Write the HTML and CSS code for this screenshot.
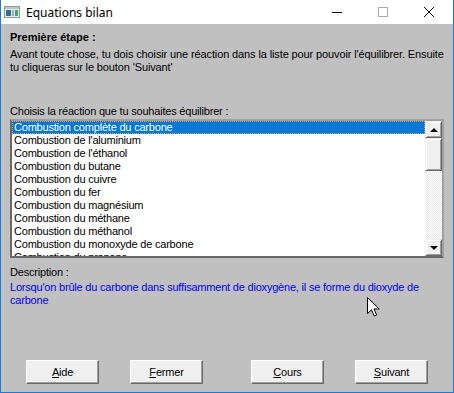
FILE: index.html
```html
<!DOCTYPE html>
<html lang="fr">
<head>
    <meta charset="UTF-8">
    <title>Equations bilan</title>
    <link rel="stylesheet" href="styles.css">
</head>
<body>
    <div class="window">
        <div class="titlebar">
            <svg class="app-icon" width="16" height="12" viewBox="0 0 16 12">
                <rect x="0.5" y="0.5" width="15" height="11" fill="#e8ecef" stroke="#8c9aa4"/>
                <rect x="1" y="1" width="14" height="2" fill="#b8c6d0"/>
                <rect x="2" y="4" width="5" height="6" fill="#2f6f8f"/>
                <rect x="8" y="4" width="2" height="6" fill="#9ab0c0"/>
                <rect x="11" y="4" width="3" height="6" fill="#3fae52"/>
            </svg>
            <span class="title">Equations bilan</span>
            <div class="caption-buttons">
                <div class="cap-btn">
                    <svg width="10" height="10" viewBox="0 0 10 10"><path d="M0 5.5H10" stroke="#000" stroke-width="1"/></svg>
                </div>
                <div class="cap-btn">
                    <svg width="10" height="10" viewBox="0 0 10 10"><rect x="0.5" y="0.5" width="9" height="9" fill="none" stroke="#a8a8a8"/></svg>
                </div>
                <div class="cap-btn">
                    <svg width="10" height="10" viewBox="0 0 10 10"><path d="M0 0L10 10M10 0L0 10" stroke="#000" stroke-width="1"/></svg>
                </div>
            </div>
        </div>

        <div class="client">
            <div class="step-title">Première étape :</div>
            <p class="intro">Avant toute chose, tu dois choisir une réaction dans la liste pour pouvoir l'équilibrer. Ensuite tu cliqueras sur le bouton 'Suivant'</p>

            <div class="list-label">Choisis la réaction que tu souhaites équilibrer :</div>
            <div class="listbox">
                <div class="items">
                    <div class="item selected">Combustion complète du carbone</div>
                    <div class="item">Combustion de l'aluminium</div>
                    <div class="item">Combustion de l'éthanol</div>
                    <div class="item">Combustion du butane</div>
                    <div class="item">Combustion du cuivre</div>
                    <div class="item">Combustion du fer</div>
                    <div class="item">Combustion du magnésium</div>
                    <div class="item">Combustion du méthane</div>
                    <div class="item">Combustion du méthanol</div>
                    <div class="item">Combustion du monoxyde de carbone</div>
                    <div class="item">Combustion du propane</div>
                </div>
                <div class="scrollbar">
                    <div class="sb-btn"><span class="arrow-up"></span></div>
                    <div class="sb-thumb"></div>
                    <div class="sb-track"></div>
                    <div class="sb-btn"><span class="arrow-down"></span></div>
                </div>
            </div>

            <div class="desc-label">Description :</div>
            <p class="desc">Lorsqu'on brûle du carbone dans suffisamment de dioxygène, il se forme du dioxyde de carbone</p>

            <div class="buttons">
                <div class="btn-group">
                    <button class="btn"><u>A</u>ide</button>
                    <button class="btn"><u>F</u>ermer</button>
                </div>
                <div class="btn-group">
                    <button class="btn"><u>C</u>ours</button>
                    <button class="btn"><u>S</u>uivant</button>
                </div>
            </div>

            <svg class="cursor" width="13" height="20" viewBox="0 0 13 20">
                <path d="M0.5 0.5V16.5L4.5 12.8L7.2 19L9.6 18L7 11.9H12.2Z" fill="#fff" stroke="#000" stroke-width="1" stroke-linejoin="miter"/>
            </svg>
        </div>
    </div>
</body>
</html>
```

FILE: styles.css
```css
body {
    margin: 0;
    width: 454px;
    height: 393px;
    overflow: hidden;
    background-color: #c0c0c0;
}
.window {
    width: 454px;
    height: 393px;
    box-sizing: border-box;
    border: 1px solid #1a7ad4;
    border-top: none;
    display: flex;
    flex-direction: column;
}
.titlebar {
    height: 24px;
    flex: none;
    background-color: white;
    display: flex;
    align-items: center;
    font-family: "Noto Sans", sans-serif;
    font-size: 12px;
    color: #000;
}
.app-icon {
    margin-left: 3px;
    margin-right: 6px;
}
.title {
    flex: 1;
}
.caption-buttons {
    display: flex;
    height: 24px;
    margin-right: 1px;
}
.cap-btn {
    width: 46px;
    display: flex;
    align-items: center;
    justify-content: center;
}
.cap-btn svg {
    display: block;
}
.client {
    flex: 1;
    position: relative;
    display: flex;
    flex-direction: column;
    padding: 7px 9px 8px;
    background-color: #c0c0c0;
    font-family: "Liberation Sans", Arial, sans-serif;
    font-size: 11px;
    line-height: 13px;
    letter-spacing: -0.2px;
    color: #000;
}
.step-title {
    font-weight: bold;
    letter-spacing: 0;
}
.intro {
    margin: 4px 0 0;
    letter-spacing: -0.12px;
}
.list-label {
    margin-top: 31px;
}
.listbox {
    margin-top: 1px;
    height: 139px;
    box-sizing: border-box;
    border: 2px solid;
    border-color: #a0a0a0 #a0a0a0 #696969 #696969;
    background-color: white;
    display: flex;
    overflow: hidden;
}
.items {
    flex: 1;
    overflow: hidden;
}
.item {
    height: 13px;
    padding-left: 2px;
    white-space: nowrap;
}
.item.selected {
    background-color: #0078d7;
    color: white;
    outline: 1px dotted #f5a040;
    outline-offset: -1px;
}
.scrollbar {
    width: 17px;
    display: flex;
    flex-direction: column;
}
.sb-btn, .sb-thumb {
    box-sizing: border-box;
    background-color: #f0f0f0;
    border: 1px solid;
    border-color: #f0f0f0 #696969 #696969 #f0f0f0;
    box-shadow: inset 1px 1px #fff, inset -1px -1px #a0a0a0;
}
.sb-btn {
    height: 17px;
    display: flex;
    align-items: center;
    justify-content: center;
}
.sb-thumb {
    height: 33px;
}
.sb-track {
    flex: 1;
    background-color: #f6f6f6;
    background-image: conic-gradient(#fff 25%, #e6e6e6 0 50%, #fff 0 75%, #e6e6e6 0);
    background-size: 2px 2px;
}
.arrow-up {
    width: 0;
    height: 0;
    border-left: 4px solid transparent;
    border-right: 4px solid transparent;
    border-bottom: 4px solid #000;
}
.arrow-down {
    width: 0;
    height: 0;
    border-left: 4px solid transparent;
    border-right: 4px solid transparent;
    border-top: 4px solid #000;
}
.desc-label {
    margin-top: 8px;
}
.desc {
    margin: 2px 0 0;
    color: #0000ff;
    padding-right: 14px;
}
.buttons {
    margin-top: auto;
    display: flex;
    justify-content: space-between;
    padding: 0 16px;
}
.btn-group {
    display: flex;
    gap: 31px;
}
.btn {
    width: 73px;
    height: 24px;
    padding: 0;
    font-family: "Liberation Sans", Arial, sans-serif;
    font-size: 11px;
    letter-spacing: -0.2px;
    color: #000;
    background-color: #f0f0f0;
    border: 1px solid;
    border-color: #fff #696969 #696969 #fff;
    box-shadow: inset -1px -1px #a0a0a0;
}
.cursor {
    position: absolute;
    left: 366px;
    top: 273px;
}
```
